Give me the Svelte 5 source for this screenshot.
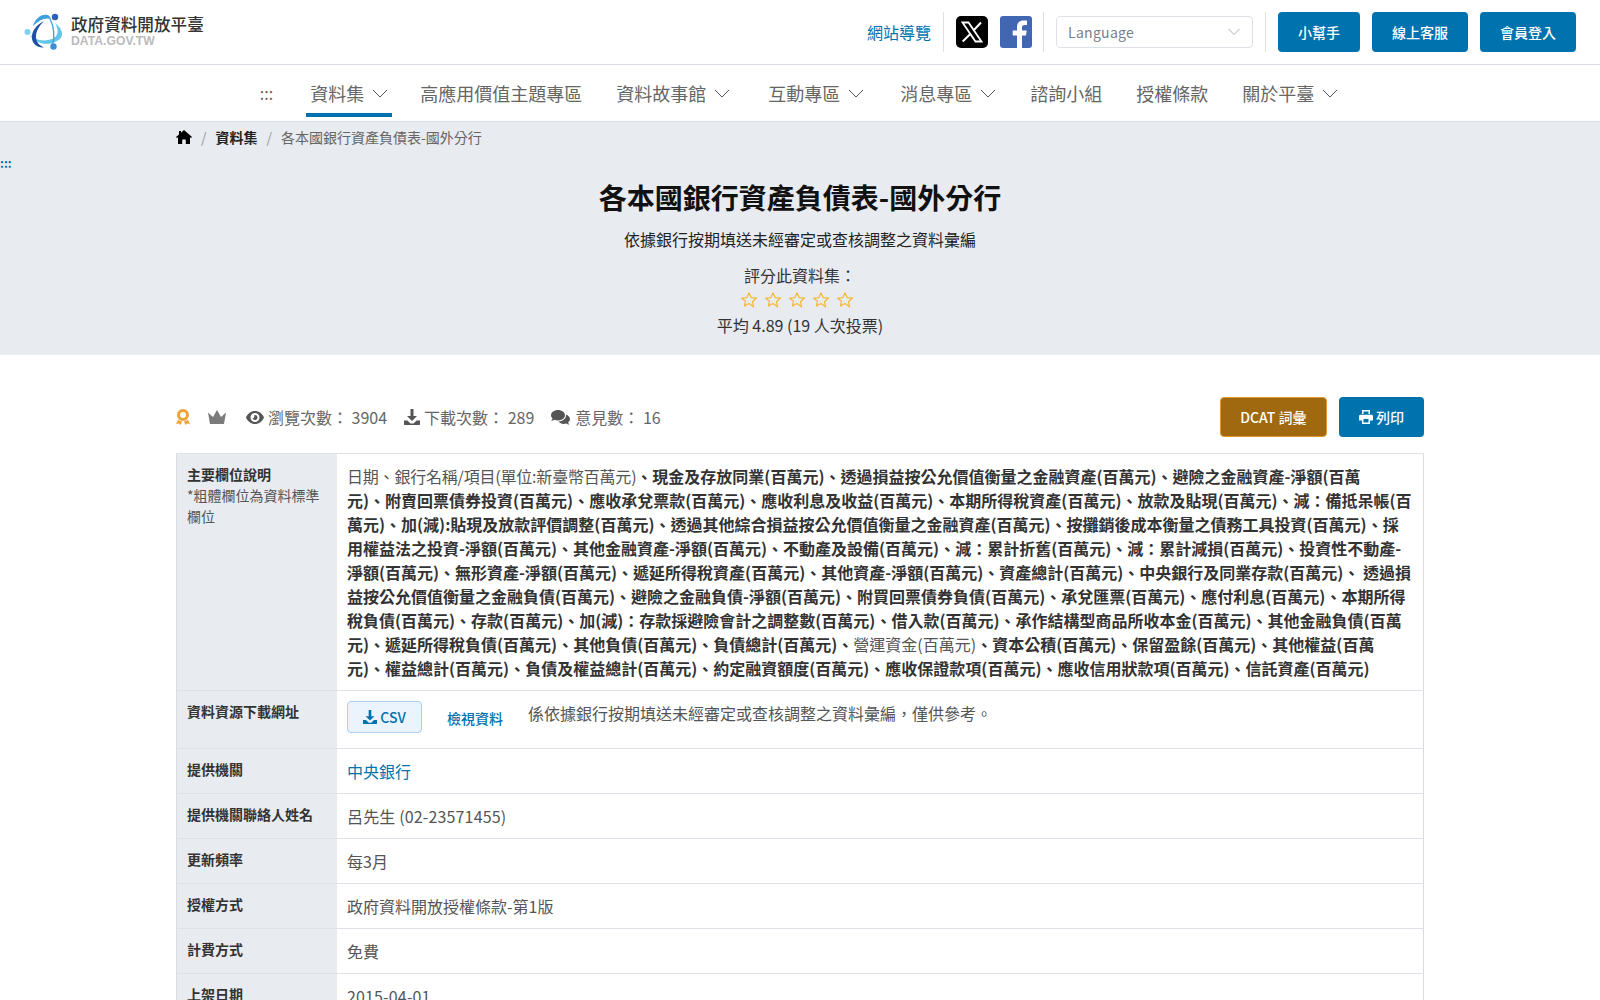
<script>
  const navItems = [
    { label: '資料集', caret: true, active: true },
    { label: '高應用價值主題專區' },
    { label: '資料故事館', caret: true, wide: true },
    { label: '互動專區', caret: true, roomy: true },
    { label: '消息專區', caret: true },
    { label: '諮詢小組' },
    { label: '授權條款' },
    { label: '關於平臺', caret: true }
  ];

  const simpleRows = [
    { name: '提供機關聯絡人姓名', value: '呂先生 (02-23571455)', num: true },
    { name: '更新頻率', value: '每3月' },
    { name: '授權方式', value: '政府資料開放授權條款-第1版' },
    { name: '計費方式', value: '免費' },
    { name: '上架日期', value: '2015-04-01', num: true }
  ];

  const stars = [1, 2, 3, 4, 5];
</script>

<div class="page">
  <header class="topbar">
    <a class="logo" href="#top">
      <svg width="40" height="38" viewBox="0 0 40 38">
        <path d="M5 21 C10 27 20 29 28 26 C33 24 36 19 31 10 C39 16 41 24 33 28 C23 34 10 30 5 21Z" fill="#62c6e8" />
        <path d="M20 8 C12 12 7 19 8 26 C9 31 13 35 20 34.500 C15 32 12 29 12 24 C12 18 15 13 20 8Z" fill="#1d4fa3" />
        <path d="M9 13 C11 6 17 1 23 2 C25 2 26 4 27 6 C21 4 15 7 9 13Z" fill="#3d9fdc" />
        <path d="M26 6 C30 13 31 24 28.500 32" fill="none" stroke="#3d9fdc" stroke-width="1.300" />
        <circle cx="31" cy="4" r="3.200" fill="#2b62b8" />
        <circle cx="3.500" cy="19" r="3" fill="#7ed0ee" />
        <circle cx="29.500" cy="33.500" r="3.200" fill="#3a8fd8" />
      </svg>
      <span class="logo-text">
        <span class="logo-name">政府資料開放平臺</span>
        <span class="logo-domain">DATA.GOV.TW</span>
      </span>
    </a>

    <div class="top-actions">
      <a class="sitemap" href="#top">網站導覽</a>
      <span class="divider"></span>
      <a class="social" href="#top" aria-label="X">
        <svg width="32" height="32" viewBox="0 0 32 32">
          <rect width="32" height="32" rx="5" fill="#000" />
          <path d="M6.500 6.500h6l13 19h-6Z" fill="none" stroke="#fff" stroke-width="1.800" />
          <path d="M25 6.500 17.300 14.800M14.500 17.800 6.700 25.500" stroke="#fff" stroke-width="2" />
        </svg>
      </a>
      <a class="social fb" href="#top" aria-label="Facebook">
        <svg width="32" height="32" viewBox="0 0 32 32">
          <rect width="32" height="32" rx="3" fill="#4267b2" />
          <path d="M22 32V19.500h4l.7-5H22v-3c0-1.500.6-2.500 2.600-2.500H27V4.600C26.500 4.500 25 4.400 23.400 4.400c-3.800 0-6.400 2.300-6.400 6.500v3.600h-4.300v5H17V32Z" fill="#fff" />
        </svg>
      </a>
      <span class="divider"></span>
      <div class="lang">
        <span>Language</span>
        <svg width="12" height="8" viewBox="0 0 12 8"><path d="M.5 1 6 6.500 11.500 1" fill="none" stroke="#a9adb5" /></svg>
      </div>
      <span class="divider"></span>
      <a class="btn" href="#top">小幫手</a>
      <a class="btn" href="#top">線上客服</a>
      <a class="btn" href="#top">會員登入</a>
    </div>
  </header>

  <nav class="mainnav">
    <span class="nav-mark">:::</span>
    {#each navItems as item}
      <a class="nav-item" class:active={item.active} class:wide={item.wide} class:roomy={item.roomy} href="#top">
        {item.label}
        {#if item.caret}
          <svg width="16" height="9" viewBox="0 0 16 9"><path d="M1 1 8 8 15 1" fill="none" stroke="#555" stroke-width="1" /></svg>
        {/if}
      </a>
    {/each}
  </nav>

  <section class="hero">
    <div class="crumbs">
      <svg width="16" height="14" viewBox="0 0 16 14"><path fill="#000" d="M8 0 16 7l-.9 1.100L14 7.200V14H9.800V9.500H6.200V14H2V7.200L.9 8.100 0 7l3-2.600V1h2v1.700Z" /></svg>
      <span class="sep">/</span>
      <a href="#top">資料集</a>
      <span class="sep">/</span>
      <span class="current">各本國銀行資產負債表-國外分行</span>
    </div>
    <div class="hero-mark">:::</div>
    <h1>各本國銀行資產負債表-國外分行</h1>
    <p class="desc">依據銀行按期填送未經審定或查核調整之資料彙編</p>
    <p class="rate-label">評分此資料集：</p>
    <div class="stars">
      {#each stars as s (s)}
        <svg width="18" height="18" viewBox="0 0 24 24"><path d="M12 2.500l2.900 6.300 6.900.8-5.100 4.700 1.400 6.800L12 16.700l-6.100 3.400 1.400-6.800L2.200 9.600l6.900-.8Z" fill="none" stroke="#f5b937" stroke-width="1.600" stroke-linejoin="round" /></svg>
      {/each}
    </div>
    <p class="avg">平均 4.89 (19 人次投票)</p>
  </section>

  <main class="content">
    <div class="statbar">
      <div class="stats">
        <svg class="medal" width="14" height="17" viewBox="0 0 14 17">
          <circle cx="7" cy="6" r="4.500" fill="none" stroke="#eea236" stroke-width="3" />
          <path d="M2 11 0 15l3-.5L4.500 16 6 12.500M12 11l2 4-3-.5L9.500 16 8 12.500" fill="#eea236" />
        </svg>
        <svg class="crown" width="18" height="14" viewBox="0 0 18 14"><path d="M0 2.500 5 7 9 0l4 7 5-4.500L16 14H2Z" fill="#7b7b7b" /></svg>
        <span class="stat first">
          <svg width="18" height="13" viewBox="0 0 18 13"><path fill-rule="evenodd" d="M9 0c4 0 7.300 2.600 9 6.500C16.300 10.400 13 13 9 13S1.700 10.400 0 6.500C1.700 2.600 5 0 9 0Zm0 2a4.500 4.500 0 1 0 0 9 4.500 4.500 0 0 0 0-9Zm0 2a2.500 2.500 0 1 1-2.400 3.200C7.500 7.500 8.700 6.300 8.300 4.100 8.500 4 8.800 4 9 4Z" fill="#555" /></svg>
          瀏覽次數： 3904
        </span>
        <span class="stat">
          <svg width="16" height="16" viewBox="0 0 16 16"><path d="M6.500 0h3v7H13L8 12 3 7h3.500ZM0 11.500h3.500L6.500 14.500h3l3-3H16V15c0 .6-.4 1-1 1H1c-.6 0-1-.4-1-1Z" fill="#555" /></svg>
          下載次數： 289
        </span>
        <span class="stat">
          <svg width="20" height="16" viewBox="0 0 20 16"><path d="M7 1C3.100 1 0 3.300 0 6.200c0 1.300.6 2.400 1.600 3.300-.3.900-.9 1.600-1.500 2.300 1.200 0 2.400-.5 3.200-1.100 1.100.5 2.400.8 3.700.8 3.900 0 7-2.300 7-5.200S10.900 1 7 1Z" fill="#555" /><path d="M15 5.500c.1.300.1.500.1.800 0 3.500-3.500 6-7.500 6.200 1 1.500 3 2.500 5.200 2.500.9 0 1.800-.2 2.500-.5.700.5 1.700 1 3 1-.5-.6-1-1.200-1.300-2 1.200-.9 2-2 2-3.400 0-2-1.700-3.700-4-4.600Z" fill="#555" /></svg>
          意見數： 16
        </span>
      </div>
      <div class="stat-buttons">
        <a class="btn dcat" href="#top">DCAT 詞彙</a>
        <a class="btn print" href="#top">
          <svg width="14" height="14" viewBox="0 0 14 14"><path d="M3 0h8v4H9.500V1.500h-5V4H3ZM1.500 4.800h11c.8 0 1.500.7 1.500 1.500V10.500h-3V14H3v-3.500H0V6.300c0-.8.700-1.500 1.500-1.500ZM4.500 9v3.500h5V9Z" fill="#fff" /></svg>
          列印
        </a>
      </div>
    </div>

    <table class="info">
      <tbody>
        <tr>
          <th>主要欄位說明<span class="hint">*粗體欄位為資料標準欄位</span></th>
          <td class="fields"><span class="plain-head">日期、銀行名稱/項目(單位:新臺幣百萬元)</span><b>、現金及存放同業(百萬元)、透過損益按公允價值衡量之金融資產(百萬元)、避險之金融資產-淨額(百萬<br />元)、附賣回票債券投資(百萬元)、應收承兌票款(百萬元)、應收利息及收益(百萬元)、本期所得稅資產(百萬元)、放款及貼現(百萬元)、減：備抵呆帳(百<br />萬元)、加(減):貼現及放款評價調整(百萬元)、透過其他綜合損益按公允價值衡量之金融資產(百萬元)、按攤銷後成本衡量之債務工具投資(百萬元)、採<br />用權益法之投資-淨額(百萬元)、其他金融資產-淨額(百萬元)、不動產及設備(百萬元)、減：累計折舊(百萬元)、減：累計減損(百萬元)、投資性不動產-<br />淨額(百萬元)、無形資產-淨額(百萬元)、遞延所得稅資產(百萬元)、其他資產-淨額(百萬元)、資產總計(百萬元)、中央銀行及同業存款(百萬元)、 透過損<br />益按公允價值衡量之金融負債(百萬元)、避險之金融負債-淨額(百萬元)、附買回票債券負債(百萬元)、承兌匯票(百萬元)、應付利息(百萬元)、本期所得<br />稅負債(百萬元)、存款(百萬元)、加(減)：存款採避險會計之調整數(百萬元)、借入款(百萬元)、承作結構型商品所收本金(百萬元)、其他金融負債(百萬<br />元)、遞延所得稅負債(百萬元)、其他負債(百萬元)、負債總計(百萬元)、</b>營運資金(百萬元)<b>、資本公積(百萬元)、保留盈餘(百萬元)、其他權益(百萬<br />元)、權益總計(百萬元)、負債及權益總計(百萬元)、約定融資額度(百萬元)、應收保證款項(百萬元)、應收信用狀款項(百萬元)、信託資產(百萬元)</b></td>
        </tr>
        <tr>
          <th>資料資源下載網址</th>
          <td>
            <div class="resource">
              <a class="csv" href="#top">
                <svg width="14" height="14" viewBox="0 0 16 16"><path d="M6.500 0h3v7H13L8 12 3 7h3.500ZM0 11.500h3.500L6.500 14.500h3l3-3H16V15c0 .6-.4 1-1 1H1c-.6 0-1-.4-1-1Z" fill="#0072ad" /></svg>
                CSV
              </a>
              <a class="view" href="#top">檢視資料</a>
              <span class="note">係依據銀行按期填送未經審定或查核調整之資料彙編，僅供參考。</span>
            </div>
          </td>
        </tr>
        <tr>
          <th>提供機關</th>
          <td><a class="org" href="#top">中央銀行</a></td>
        </tr>
        {#each simpleRows as row}
          <tr>
            <th>{row.name}</th>
            <td class:num={row.num}>{row.value}</td>
          </tr>
        {/each}
      </tbody>
    </table>
  </main>
</div>

<style>
  :global(html), :global(body) {
    margin: 0;
    height: 1000px;
    overflow: hidden;
    background: #fff;
  }

  .page {
    font-family: "Noto Sans CJK TC", "Noto Sans", sans-serif;
    font-size: 16px;
    line-height: 24px;
    color: #333;
  }

  a {
    text-decoration: none;
    color: inherit;
  }

  p, h1 {
    margin: 0;
  }

  .topbar {
    height: 65px;
    box-sizing: border-box;
    padding: 0 24px;
    display: flex;
    align-items: center;
    justify-content: space-between;
    border-bottom: 1px solid #d9dce6;
  }

  .logo {
    display: flex;
    align-items: center;
    gap: 7px;
  }

  .logo-text {
    display: flex;
    flex-direction: column;
    margin-top: -3px;
  }

  .logo-name {
    font-size: 16.600px;
    line-height: 20px;
    color: #333;
    font-weight: 500;
  }

  .logo-domain {
    font-family: "Liberation Sans", sans-serif;
    font-size: 12.200px;
    line-height: 14px;
    font-weight: 700;
    color: #bbb;
  }

  .top-actions {
    display: flex;
    align-items: center;
    gap: 12px;
    height: 40px;
  }

  .sitemap {
    color: #0072ad;
  }

  .divider {
    width: 1px;
    height: 40px;
    background: #dcdfe4;
  }

  .social {
    display: flex;
  }

  .social.fb {
    margin-right: -1px;
  }

  .lang {
    width: 197px;
    height: 32px;
    box-sizing: border-box;
    padding: 0 12px 0 11px;
    display: flex;
    align-items: center;
    justify-content: space-between;
    border: 1px solid #dfe1e8;
    border-radius: 4px;
    font-size: 14px;
    letter-spacing: .3px;
    color: #7a7f87;
  }

  .btn {
    height: 40px;
    box-sizing: border-box;
    padding: 0 20px;
    display: flex;
    align-items: center;
    background: #0072ad;
    border-radius: 4px;
    color: #fff;
    font-size: 14px;
    font-weight: 500;
  }

  .mainnav {
    height: 57px;
    box-sizing: border-box;
    padding-left: 2px;
    display: flex;
    align-items: stretch;
    justify-content: center;
    gap: 26px;
    border-bottom: 1px solid #d9dce6;
    font-size: 18px;
    color: #666;
  }

  .nav-mark {
    align-self: center;
    font-size: 16px;
    color: #666;
    margin-right: 7px;
  }

  .nav-item {
    display: flex;
    align-items: center;
    gap: 8px;
    padding: 8px 4px 0;
    border-bottom: 4px solid transparent;
    margin-bottom: 4px;
    box-sizing: border-box;
  }

  .nav-item.wide {
    margin-right: 4px;
  }

  .nav-item.roomy {
    margin-right: 2px;
  }

  .nav-item.active {
    margin-right: -2px;
    border-bottom-color: #0072ad;
  }

  .hero {
    height: 233px;
    box-sizing: border-box;
    background: #e8ebf0;
    text-align: center;
  }

  .crumbs {
    width: 1248px;
    margin: 0 auto;
    height: 30px;
    display: flex;
    align-items: center;
    gap: 9px;
    font-size: 14px;
    font-weight: 700;
    color: #222;
  }

  .crumbs .sep {
    color: #999;
    font-weight: 400;
  }

  .crumbs .current {
    color: #666;
    font-weight: 400;
  }

  .hero-mark {
    text-align: left;
    height: 14px;
    margin-top: 4px;
    font-size: 12px;
    line-height: 14px;
    font-weight: 700;
    color: #0072ad;
  }

  h1 {
    font-size: 28px;
    line-height: 40px;
    margin-top: 7px;
    font-weight: 700;
    color: #111;
  }

  .desc {
    margin-top: 10px;
    color: #222;
  }

  .rate-label {
    margin-top: 12px;
    color: #333;
  }

  .stars {
    height: 24px;
    margin-top: 1px;
    padding-right: 6px;
    display: flex;
    justify-content: center;
    align-items: center;
    gap: 6px;
  }

  .avg {
    line-height: 26px;
  }

  .content {
    width: 1248px;
    margin: 0 auto;
    padding-top: 42px;
  }

  .statbar {
    height: 40px;
    display: flex;
    align-items: center;
    justify-content: space-between;
    margin-bottom: 16px;
  }

  .stats {
    display: flex;
    align-items: center;
    color: #666;
  }

  .crown {
    margin-left: 18px;
  }

  .stat {
    display: flex;
    align-items: center;
    gap: 4px;
    margin-left: 17px;
  }

  .stat.first {
    margin-left: 20px;
  }

  .stat-buttons {
    display: flex;
    gap: 12px;
  }

  .btn.dcat {
    padding: 0 19.500px;
    background: #a0690f;
    border: 1px solid #e0992e;
  }

  .btn.print {
    gap: 3px;
  }

  .info {
    width: 100%;
    border-collapse: collapse;
    border: 1px solid #dcdcdc;
  }

  th, td {
    padding: 10px;
    vertical-align: top;
    text-align: left;
    border-top: 1px solid #dfe1e8;
  }

  th {
    width: 140px;
    background: #e8ebf0;
    font-size: 14px;
    line-height: 21px;
    font-weight: 700;
  }

  td {
    color: #555;
  }

  td.num {
    letter-spacing: .15px;
  }

  .hint {
    display: block;
    font-weight: 400;
    color: #555;
  }

  .plain-head {
    letter-spacing: -.2px;
  }

  .fields {
    white-space: nowrap;
  }

  .fields b {
    color: #333;
    font-weight: 700;
  }

  .resource {
    display: flex;
    align-items: flex-start;
    gap: 25px;
    margin-bottom: 5px;
  }

  .csv {
    width: 75px;
    height: 32px;
    box-sizing: border-box;
    display: flex;
    align-items: center;
    justify-content: center;
    gap: 3px;
    background: #ebf3fd;
    border: 1px solid #a9cff2;
    border-radius: 4px;
    font-size: 14px;
    font-weight: 500;
    color: #0072ad;
  }

  .view {
    margin-top: 5px;
    font-size: 14px;
    font-weight: 500;
    color: #0072ad;
  }

  .org {
    color: #0072ad;
  }
</style>
